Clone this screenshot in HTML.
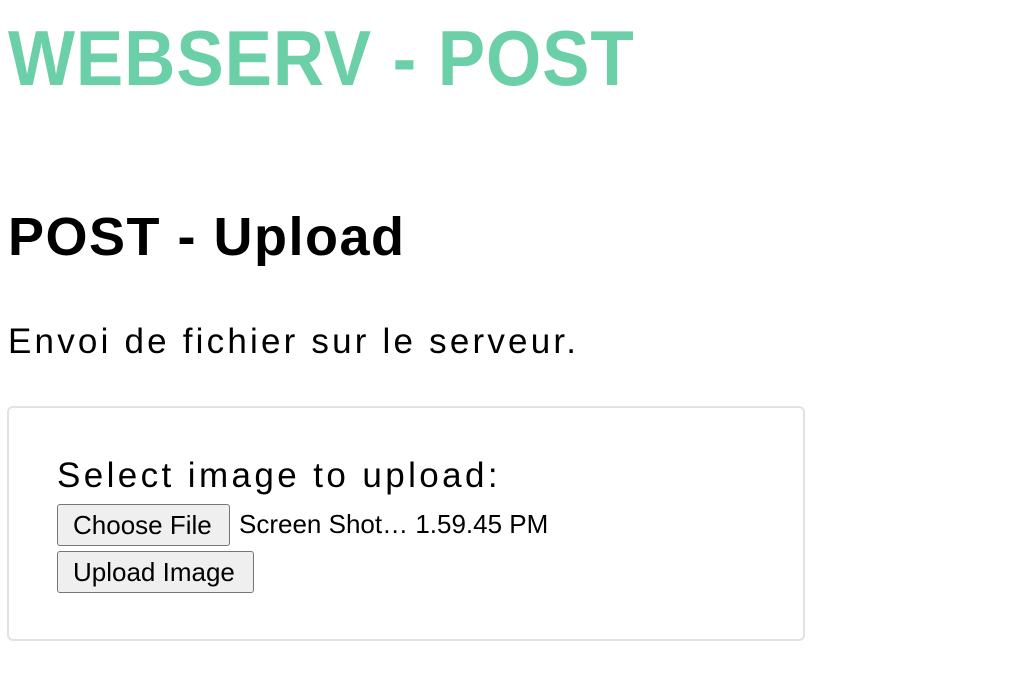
<!DOCTYPE html>
<html><head><style>
body{margin:0;background:#fff;font-family:"Liberation Sans",sans-serif;width:1028px;height:682px;overflow:hidden;position:relative}
.a{position:absolute;white-space:nowrap;line-height:1}
h1{position:absolute;margin:0;left:8px;top:19px;font-size:78px;color:#6bd0a8;font-weight:bold;letter-spacing:1px;line-height:1;transform:scaleX(0.91);transform-origin:0 0;white-space:nowrap}
.b{position:absolute;border:1px solid #767676;border-radius:3px;background:#efefef;font-size:26px;box-sizing:border-box;height:42px;line-height:40px;padding:0 0 0 15px;white-space:nowrap}
</style></head><body>
<h1>WEBSERV - POST</h1>
<div class="a" style="left:8px;top:210px;font-size:54px;font-weight:bold;letter-spacing:1.5px">POST - Upload</div>
<div class="a" style="left:8px;top:324px;font-size:35px;letter-spacing:3.2px">Envoi de fichier sur le serveur.</div>
<div style="position:absolute;left:7px;top:406px;width:798px;height:235px;box-sizing:border-box;border:2px solid #e2e2e2;border-radius:6px"></div>
<div class="a" style="left:57px;top:458px;font-size:35px;letter-spacing:3.4px">Select image to upload:</div>
<div class="b" style="left:57px;top:504px;width:173px">Choose File</div>
<div class="a" style="left:239px;top:511px;font-size:26px">Screen Shot… 1.59.45 PM</div>
<div class="b" style="left:57px;top:551px;width:197px">Upload Image</div>
</body></html>
